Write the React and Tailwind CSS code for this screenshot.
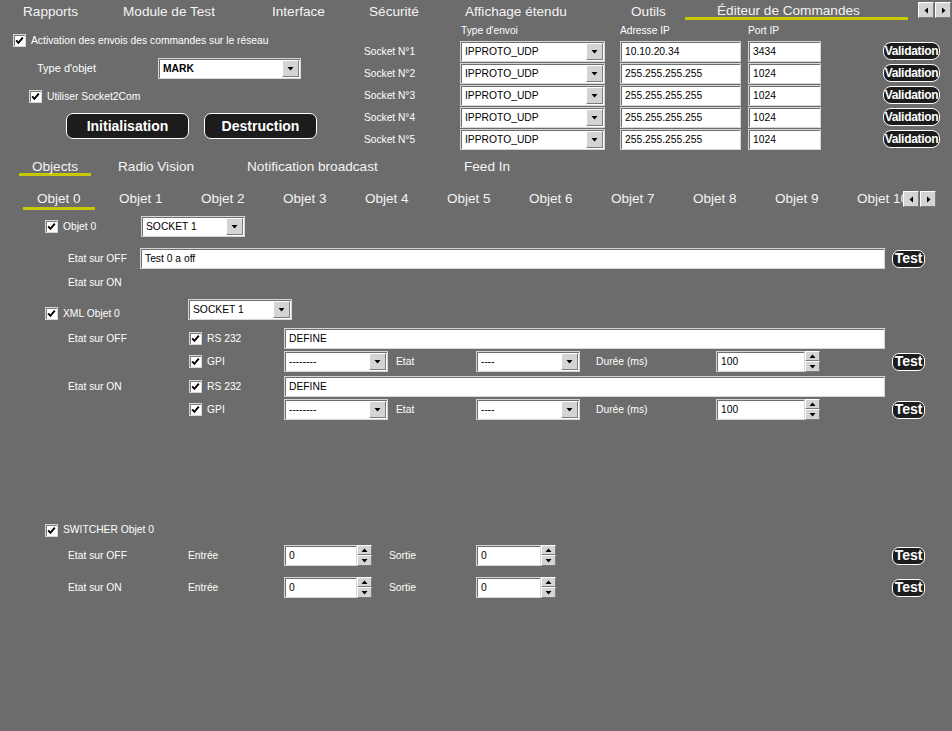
import React from 'react';

const field = 'bg-white border border-[#d6d6d6] shadow-[inset_1px_1px_0_#6f6f6f]';

const Check = () => (
    <span className="inline-flex w-[13px] h-[13px] shrink-0 items-center justify-center bg-white border border-[#d6d6d6] shadow-[inset_1px_1px_0_#7a7a7a]">
        <svg width="9" height="9" viewBox="0 0 9 9">
            <path d="M1.2 4.4 L3.4 6.8 L7.8 1.6" stroke="#000" strokeWidth="1.9" fill="none" />
        </svg>
    </span>
);

const Arrow = ({ dir }) => (
    <svg width="7" height="7" viewBox="0 0 7 7">
        {dir === 'down' && <path d="M0.5 2 L6.5 2 L3.5 5.5 Z" fill="#000" />}
        {dir === 'up' && <path d="M0.5 5 L6.5 5 L3.5 1.5 Z" fill="#000" />}
        {dir === 'left' && <path d="M5 0.5 L5 6.5 L1.5 3.5 Z" fill="#000" />}
        {dir === 'right' && <path d="M2 0.5 L2 6.5 L5.5 3.5 Z" fill="#000" />}
    </svg>
);

const bevel = 'bg-[#d4d4d4] border border-t-white border-l-white border-b-[#7c7c7c] border-r-[#7c7c7c]';

const Select = ({ cls, value, bold }) => (
    <div className={`flex h-[21px] shrink-0 ${field} ${cls}`}>
        <span className={`flex-1 pl-[4px] pt-[1px] text-[10.3px] leading-[17px] text-black truncate ${bold ? 'font-bold' : ''}`}>{value}</span>
        <span className={`w-[17px] h-[17px] mt-[1px] mr-[1px] flex items-center justify-center ${bevel}`}>
            <Arrow dir="down" />
        </span>
    </div>
);

const Input = ({ cls, value }) => (
    <div className={`h-[21px] shrink-0 pl-[4px] pt-[1px] text-[10.3px] leading-[17px] text-black ${field} ${cls}`}>{value}</div>
);

const Spin = ({ cls, value }) => (
    <div className="flex shrink-0">
        <Input cls={cls} value={value} />
        <div className="flex flex-col w-[15px] h-[21px]">
            <span className={`h-[10px] flex items-center justify-center ${bevel}`}><Arrow dir="up" /></span>
            <span className={`h-[11px] flex items-center justify-center ${bevel}`}><Arrow dir="down" /></span>
        </div>
    </div>
);

const Pill = ({ children, cls }) => (
    <span className={`inline-flex items-center justify-center bg-[#1c1c1c] border border-white rounded-[7px] text-white font-bold ${cls}`}>{children}</span>
);

const Scroller = () => (
    <div className="flex gap-[1px]">
        <span className={`w-[16px] h-[16px] flex items-center justify-center ${bevel}`}><Arrow dir="left" /></span>
        <span className={`w-[16px] h-[16px] flex items-center justify-center ${bevel}`}><Arrow dir="right" /></span>
    </div>
);

const mainTabs = [
    { label: 'Rapports', w: 'w-[100px]' },
    { label: 'Module de Test', w: 'w-[149px]' },
    { label: 'Interface', w: 'w-[97px]' },
    { label: 'Sécurité', w: 'w-[96px]' },
    { label: 'Affichage étendu', w: 'w-[166px]' },
    { label: 'Outils', w: 'w-[54px]' },
];

const sockets = [
    { ip: '10.10.20.34', port: '3434' },
    { ip: '255.255.255.255', port: '1024' },
    { ip: '255.255.255.255', port: '1024' },
    { ip: '255.255.255.255', port: '1024' },
    { ip: '255.255.255.255', port: '1024' },
];

const objets = ['Objet 0', 'Objet 1', 'Objet 2', 'Objet 3', 'Objet 4', 'Objet 5', 'Objet 6', 'Objet 7', 'Objet 8', 'Objet 9', 'Objet 10'];

const GpiRow = () => (
    <div className="flex items-center h-[21px] w-[925px] mt-[2px]">
        <span className="w-[189px]" />
        <span className="w-[95px] flex items-center gap-[5px]"><Check /><span>GPI</span></span>
        <Select cls="w-[104px]" value="--------" />
        <span className="w-[88px] pl-[8px]">Etat</span>
        <Select cls="w-[104px]" value="----" />
        <span className="w-[136px] pl-[16px]">Durée (ms)</span>
        <Spin cls="w-[89px]" value="100" />
        <Pill cls="ml-auto w-[33px] h-[18px] text-[14px]">Test</Pill>
    </div>
);

export default function App() {
    return (
        <div className="w-[952px] h-[731px] overflow-hidden bg-[#6c6c6c] text-white text-[10.3px] font-['Liberation_Sans',Arial,sans-serif]">
            {/* main tabs */}
            <div className="flex h-[22px] pl-[23px] text-[13.6px] text-[#f4f4f4]">
                {mainTabs.map((t) => (
                    <span key={t.label} className={`${t.w} leading-[15px] pt-[4px]`}>{t.label}</span>
                ))}
                <span className="w-[223px] h-[20px] pt-[4px] leading-[13px] pl-[32px] border-b-[3px] border-[#c6c800]">Éditeur de Commandes</span>
                <span className="ml-[10px] mt-[2px]"><Scroller /></span>
            </div>

            {/* config block */}
            <div className="flex h-[128px]">
                <div className="w-[360px]">
                    <div className="flex items-center gap-[5px] pl-[13px] mt-[12px] h-[13px]">
                        <Check />
                        <span>Activation des envois des commandes sur le réseau</span>
                    </div>
                    <div className="flex items-center mt-[11px] h-[21px]">
                        <span className="pl-[37px] w-[158px] text-[11px]">Type d'objet</span>
                        <Select cls="w-[143px]" value="MARK" bold />
                    </div>
                    <div className="flex items-center gap-[5px] pl-[29px] mt-[11px] h-[13px]">
                        <Check />
                        <span>Utiliser Socket2Com</span>
                    </div>
                    <div className="flex gap-[15px] pl-[66px] mt-[10px]">
                        <Pill cls="w-[123px] h-[26px] text-[14px]">Initialisation</Pill>
                        <Pill cls="w-[113px] h-[26px] text-[14px]">Destruction</Pill>
                    </div>
                </div>
                <div className="flex flex-col">
                    <div className="flex items-center h-[18px] text-[10.2px]">
                        <span className="w-[101px]" />
                        <span className="w-[159px]">Type d'envoi</span>
                        <span className="w-[128px]">Adresse IP</span>
                        <span>Port IP</span>
                    </div>
                    {sockets.map((s, i) => (
                        <div key={i} className="flex items-center h-[22px] text-[10.2px]">
                            <span className="w-[100px] pl-[4px] pt-[1px]">Socket N°{i + 1}</span>
                            <Select cls="w-[145px]" value="IPPROTO_UDP" />
                            <Input cls="w-[121px] ml-[15px]" value={s.ip} />
                            <Input cls="w-[73px] ml-[7px]" value={s.port} />
                            <Pill cls="ml-[62px] w-[57px] h-[18px] text-[12px] tracking-[-0.3px] rounded-[8px]">Validation</Pill>
                        </div>
                    ))}
                </div>
            </div>

            {/* sub tabs */}
            <div className="flex pt-[10px] h-[34px] text-[13.6px] text-[#f4f4f4]">
                <span className="ml-[19px] w-[72px] text-center leading-[14px] h-[16px] border-b-[3px] border-[#c6c800]">Objects</span>
                <span className="ml-[27px] w-[129px] leading-[14px]">Radio Vision</span>
                <span className="w-[217px] leading-[14px]">Notification broadcast</span>
                <span className="leading-[14px]">Feed In</span>
            </div>

            {/* objet tabs */}
            <div className="flex pt-[7px] h-[26px]">
                <div className="flex w-[903px] overflow-hidden pl-[17px] text-[13.5px] text-[#f4f4f4]">
                    {objets.map((o, i) => (
                        <div key={o} className="w-[82px] shrink-0 flex flex-col">
                            <span className="leading-[15px] whitespace-nowrap pl-[20px]">{o}</span>
                            {i === 0 && <span className="w-[72px] ml-[6px] h-[3px] bg-[#c6c800] mt-[1px]" />}
                        </div>
                    ))}
                </div>
                <Scroller />
            </div>

            {/* objet 0 */}
            <div className="flex items-center h-[21px] mt-[6px] pl-[45px]">
                <Check />
                <span className="w-[83px] pl-[5px]">Objet 0</span>
                <Select cls="w-[104px]" value="SOCKET 1" />
            </div>
            <div className="flex items-center h-[21px] mt-[11px] w-[925px]">
                <span className="pl-[68px] w-[140px]">Etat sur OFF</span>
                <Input cls="w-[745px]" value="Test 0 a off" />
                <Pill cls="ml-auto w-[33px] h-[18px] text-[14px]">Test</Pill>
            </div>
            <div className="flex items-center h-[14px] mt-[7px] pl-[68px]">Etat sur ON</div>

            {/* XML objet 0 */}
            <div className="flex h-[21px] mt-[9px] pl-[45px]">
                <span className="flex items-center gap-[5px] w-[143px] mt-[8px] h-[13px]">
                    <Check />
                    <span>XML Objet 0</span>
                </span>
                <Select cls="w-[104px]" value="SOCKET 1" />
            </div>
            <div className="flex items-center h-[21px] mt-[8px]">
                <span className="pl-[68px] w-[189px]">Etat sur OFF</span>
                <span className="w-[95px] flex items-center gap-[5px]"><Check /><span>RS 232</span></span>
                <Input cls="w-[601px]" value="DEFINE" />
            </div>
            <GpiRow />
            <div className="flex items-center h-[21px] mt-[4px]">
                <span className="pl-[68px] w-[189px]">Etat sur ON</span>
                <span className="w-[95px] flex items-center gap-[5px]"><Check /><span>RS 232</span></span>
                <Input cls="w-[601px]" value="DEFINE" />
            </div>
            <GpiRow />

            {/* switcher */}
            <div className="flex items-center gap-[5px] h-[14px] mt-[103px] pl-[45px]">
                <Check />
                <span>SWITCHER Objet 0</span>
            </div>
            {['Etat sur OFF', 'Etat sur ON'].map((e, i) => (
                <div key={e} className={`flex items-center h-[21px] w-[925px] ${i === 0 ? 'mt-[8px]' : 'mt-[11px]'}`}>
                    <span className="pl-[68px] w-[188px]">{e}</span>
                    <span className="w-[96px]">Entrée</span>
                    <Spin cls="w-[73px]" value="0" />
                    <span className="w-[104px] pl-[17px]">Sortie</span>
                    <Spin cls="w-[65px]" value="0" />
                    <Pill cls="ml-auto w-[33px] h-[18px] text-[14px]">Test</Pill>
                </div>
            ))}
        </div>
    );
}
